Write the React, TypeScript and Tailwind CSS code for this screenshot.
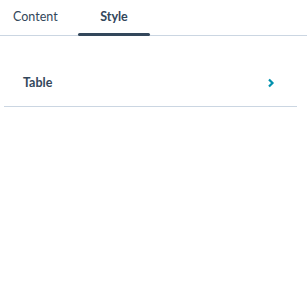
export default function App() {
  return (
    <div className="w-[307px] h-[281px] bg-white font-['Lato',sans-serif] text-[#33475b]">
      {/* Tabs */}
      <div className="flex h-[36px] border-b border-[#cbd6e2]">
        <div className="w-[78px] pl-[13px] pt-[8px] text-[12.5px] text-[#33475b]">
          Content
        </div>
        <div className="relative w-[72px] flex justify-center pt-[8px] text-[12.5px] font-bold text-[#33475b]">
          Style
          <div className="absolute left-0 right-0 bottom-[-1px] h-[3px] rounded-full bg-[#33475b]" />
        </div>
      </div>

      {/* Row */}
      <div className="mx-[4px] mt-[33px] w-[293px] h-[38px] flex items-start justify-between pl-[19px] pr-[22px] border-b border-[#cbd6e2]">
        <span className="text-[12.5px] font-bold text-[#33475b] leading-[28px]">Table</span>
        <svg width="9" height="10" viewBox="0 0 9 10" className="mt-[9px]">
          <path d="M3 1.5 L6.5 5 L3 8.5" fill="none" stroke="#0091ae" strokeWidth="2.2" />
        </svg>
      </div>
    </div>
  );
}
